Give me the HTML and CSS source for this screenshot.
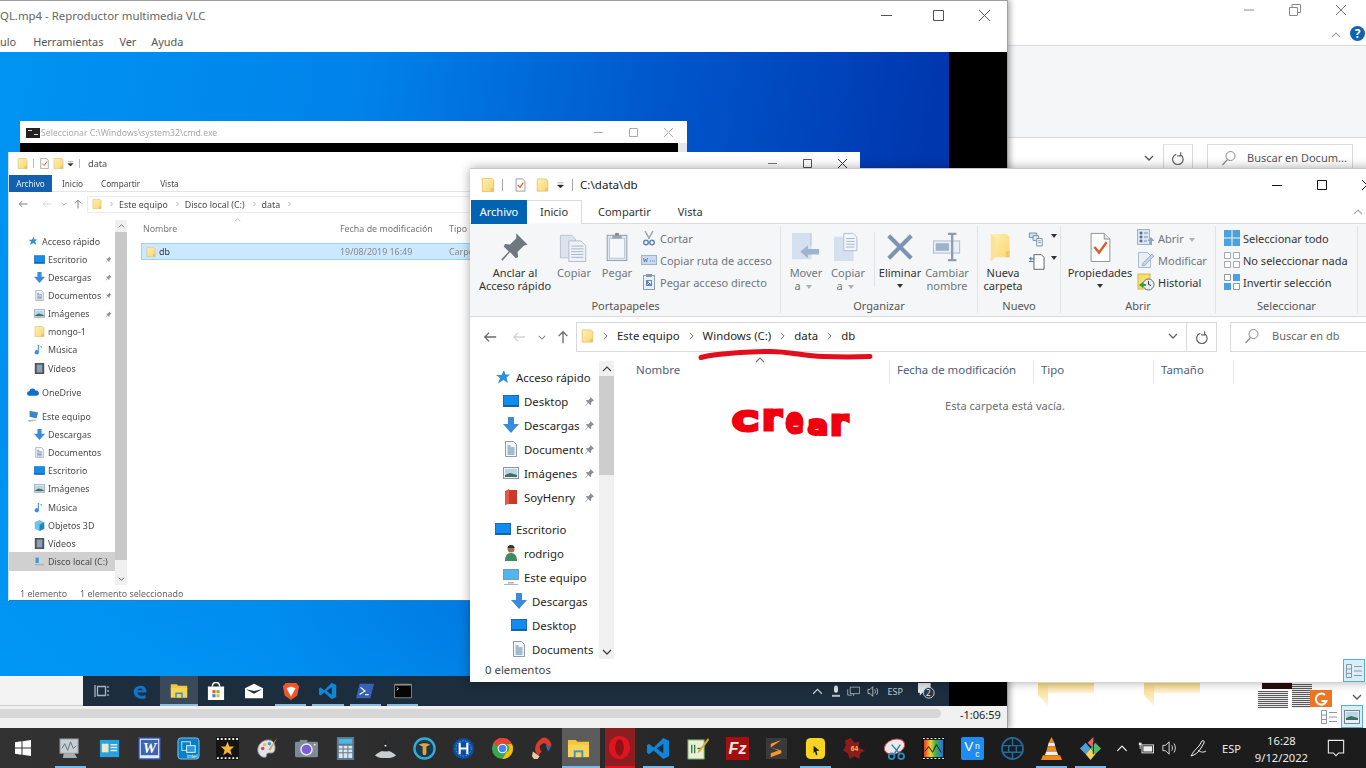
FILE: index.html
```html
<!DOCTYPE html>
<html lang="es">
<head>
<meta charset="utf-8">
<title>C:\data\db</title>
<link rel="stylesheet" href="styles.css">
</head>
<body>
<svg class="defs" aria-hidden="true">
<defs>
<linearGradient id="g-folder" x1="0" y1="0" x2="1" y2="1"><stop offset="0" stop-color="#fff0b0"/><stop offset="1" stop-color="#f8d577"/></linearGradient>
<linearGradient id="g-bf" x1="0" y1="0" x2="0" y2="1"><stop offset="0" stop-color="#f6d883"/><stop offset="1" stop-color="#fdf3d6"/></linearGradient>
<symbol id="i-folder" viewBox="0 0 16 16"><path d="M1.5.5h11l2 2v13h-13z" fill="url(#g-folder)" stroke="#e3c270"/><path d="M11 15.5V12l3.5-1v4.5z" fill="#e9c468"/></symbol>
<symbol id="i-check" viewBox="0 0 16 16"><path d="M2.5.5h8l3 3v12h-11z" fill="#fff" stroke="#8a8a8a"/><path d="M4.5 8l3 3 4-6" fill="none" stroke="#e0562a" stroke-width="1.4"/></symbol>
<symbol id="i-pin" viewBox="0 0 24 24"><path d="M13 1l9 9-3 1-5 5 .5 4-2 1-4.5-5-6 7-1-1 6-6.500-4-4 1-2 4 .5 5-5z" fill="#6f7780"/></symbol>
<symbol id="i-pins" viewBox="0 0 12 12"><path d="M7 1l4 4-1.500.5-2 2 .3 2-1 .5-2-2.300-3 3.300-.6-.5 3-3.200-2-2 .5-1 2 .3 2-2z" fill="#8a9098"/></symbol>
<symbol id="i-copy" viewBox="0 0 32 32"><path d="M1.500 3.500h12l4 4v20h-16z" fill="#dbe3ee" stroke="#b7c1cd"/><path d="M10.500 9.500h13l5 5v17h-18z" fill="#eef2f7" stroke="#b0bac6"/><path d="M13 15h13M13 18h13M13 21h13M13 24h13M13 27h13" stroke="#9fb3c9"/></symbol>
<symbol id="i-paste" viewBox="0 0 32 32"><rect x="5.500" y="3.500" width="21" height="27" fill="#dde6f3" stroke="#8f9aa8"/><rect x="8" y="7" width="16" height="21" fill="#f4f7fb" stroke="#bcc6d4"/><path d="M11 3.500h10V7H11z" fill="#9aa6b4"/><rect x="14" y="1" width="4" height="3" fill="#7f8a97"/></symbol>
<symbol id="i-cut" viewBox="0 0 16 16"><path d="M4 1l4.500 8M12 1L7.500 9" stroke="#9aa3ad" stroke-width="1.500" fill="none"/><circle cx="5" cy="12.500" r="2.300" fill="none" stroke="#5e87b3" stroke-width="1.400"/><circle cx="11" cy="12.500" r="2.300" fill="none" stroke="#5e87b3" stroke-width="1.400"/></symbol>
<symbol id="i-path" viewBox="0 0 16 16"><rect x=".5" y="3.500" width="15" height="9" fill="#c9d9ee" stroke="#9bb4d2"/><path d="M2.500 6l1 4 1-3 1 3 1-4M9 9h1M11 9h1M13 9h1" stroke="#6786a9" fill="none"/></symbol>
<symbol id="i-short" viewBox="0 0 16 16"><rect x="2.500" y="1.500" width="11" height="14" fill="#e8eef6" stroke="#8aa0b8"/><rect x="5" y="0" width="6" height="3" fill="#8a98a8"/><rect x="5" y="6" width="6" height="6" fill="#5d89bd"/><path d="M6.500 10.500l3-3M7.500 7.500h2v2" stroke="#fff" fill="none"/></symbol>
<symbol id="i-move" viewBox="0 0 32 32"><path d="M1 1h21v28H1z" fill="#d4e0ef"/><path d="M22 1v13h-1.500V1z" fill="#c2d1e4"/><path d="M10 21l8-7v4h12v6H18v4z" fill="#9eb3cc"/></symbol>
<symbol id="i-copyto" viewBox="0 0 32 32"><path d="M1 5h21v26H1z" fill="#d4e0ef"/><path d="M11.500 1.500h10l4 4V20h-14z" fill="#f2f5f9" stroke="#adbccd"/><path d="M14 7h9M14 10h9M14 13h9M14 16h9" stroke="#9fb3c9"/></symbol>
<symbol id="i-x" viewBox="0 0 32 32"><path d="M4 4l24 24M28 4L4 28" stroke="#7d93b2" stroke-width="4.500" fill="none"/></symbol>
<symbol id="i-rename" viewBox="0 0 32 32"><rect x="1.500" y="9.500" width="28" height="13" fill="#e7eef7" stroke="#a9bcd3"/><rect x="4" y="12" width="14" height="8" fill="#9fb1c8"/><path d="M17 2h9M17 30h9M21.500 2v28" stroke="#8e9cae" stroke-width="2.500" fill="none"/></symbol>
<symbol id="i-newf" viewBox="0 0 32 32"><path d="M3 2h17l3 3v22H8l-5 4z" fill="url(#g-folder)"/><path d="M3 2v29l5-4V6z" fill="#fae29a"/><path d="M19 27v-6l4-1v7z" fill="#edc866"/></symbol>
<symbol id="i-newi" viewBox="0 0 24 16"><path d="M1.500 1.500h8v5h-8z" fill="#cfe0f0" stroke="#6c87a3"/><path d="M5.500 4.500h6v5h-6z" fill="#e7eff7" stroke="#6c87a3"/><path d="M9.500 7.500h6v8h-6z" fill="#fff" stroke="#6c87a3"/><path d="M11 10h3M11 12h3" stroke="#6c87a3"/></symbol>
<symbol id="i-newd" viewBox="0 0 24 18"><path d="M6.500 1.500h8l3 3v13h-11z" fill="#fff" stroke="#555"/><path d="M1 6h6M3 4v4M1 9h5" stroke="#2f6ea8"/></symbol>
<symbol id="i-props" viewBox="0 0 32 32"><path d="M6.500 1.500h14l6 6v24h-20z" fill="#fdfdfd" stroke="#8d8d8d"/><path d="M20.500 1.500v6h6" fill="#e8e8e8" stroke="#8d8d8d"/><path d="M10 16l5 6 8-11" fill="none" stroke="#e2562a" stroke-width="2.500"/></symbol>
<symbol id="i-open" viewBox="0 0 18 18"><rect x=".5" y=".5" width="12" height="15" fill="#dbe5f1" stroke="#9fb2c7"/><path d="M3 3h2v2H3zM3 7h2v2H3zM3 11h2v2H3zM7 4h4M7 8h4M7 12h3" stroke="#7a93ae"/><path d="M14 8l3.500 4H15v4h-2v-4h-2.500z" fill="#8ba6c3"/></symbol>
<symbol id="i-edit" viewBox="0 0 18 18"><path d="M1.500 1.500h9l3 3v12h-12z" fill="#e8eff7" stroke="#a9bcd0"/><path d="M5 15l1-3 9-9 2 2-9 9z" fill="#c5d6e8" stroke="#9db3ca"/></symbol>
<symbol id="i-hist" viewBox="0 0 18 18"><rect x="1" y="1" width="12" height="15" fill="#f7dd6e" stroke="#d5b84c"/><circle cx="11.500" cy="11.500" r="5.500" fill="#e8eef2" stroke="#60707c"/><path d="M11.500 8v3.500l2.500 1" stroke="#333" fill="none"/><path d="M2 12l4-3v2h3v2H6v2z" fill="#2f9f3b"/></symbol>
<symbol id="i-sa" viewBox="0 0 16 16"><path d="M0 0h16v16H0z" fill="#4aa1dd"/><path d="M7.500 0v16M8.500 0v16M0 7.500h16M0 8.500h16" stroke="#d9ecf8" stroke-width=".6"/></symbol>
<symbol id="i-sn" viewBox="0 0 16 16"><path d="M.5.500h6v6h-6zM9.500.500h6v6h-6zM.5 9.500h6v6h-6zM9.500 9.500h6v6h-6z" fill="#fff" stroke="#a8a8a8"/></symbol>
<symbol id="i-si" viewBox="0 0 16 16"><path d="M.5.500h6v6h-6zM9.500 9.500h6v6h-6z" fill="#fff" stroke="#8a9aa8"/><path d="M9 0h7v7H9zM0 9h7v7H0z" fill="#4aa1dd"/></symbol>
<symbol id="i-back" viewBox="0 0 16 16"><path d="M15 8H2M7 3L2 8l5 5" fill="none" stroke="currentColor" stroke-width="1.500"/></symbol>
<symbol id="i-up" viewBox="0 0 16 16"><path d="M8 15V2M3 7l5-5 5 5" fill="none" stroke="currentColor" stroke-width="1.500"/></symbol>
<symbol id="i-cd" viewBox="0 0 10 6"><path d="M1 1l4 4 4-4" fill="none" stroke="currentColor" stroke-width="1.300"/></symbol>
<symbol id="i-cu" viewBox="0 0 10 6"><path d="M1 5l4-4 4 4" fill="none" stroke="currentColor" stroke-width="1.100"/></symbol>
<symbol id="i-cr" viewBox="0 0 6 10"><path d="M1 1l4 4-4 4" fill="none" stroke="currentColor" stroke-width="1.200"/></symbol>
<symbol id="i-refresh" viewBox="0 0 16 16"><path d="M6 2.800A6 6 0 1 0 11 3.400M11 .5v4h-4" fill="none" stroke="#666" stroke-width="1.400" transform="translate(0 1)"/></symbol>
<symbol id="i-search" viewBox="0 0 16 16"><circle cx="9.500" cy="6" r="4.500" fill="none" stroke="#8a8a8a"/><path d="M6.500 9.500L1.500 15" stroke="#8a8a8a" stroke-width="1.200"/></symbol>
<symbol id="i-star" viewBox="0 0 16 16"><path d="M9 1l1.500 4.500H15l-3.500 3L13 14 8.500 11 3 14.500l2-5.500L1 6h5.500z" fill="#2f8fdd"/></symbol>
<symbol id="i-desk" viewBox="0 0 16 12"><rect x=".5" y=".5" width="15" height="11" fill="#0f8df0" stroke="#226aa8"/><rect x="1" y="10" width="14" height="1.500" fill="#165f9d"/></symbol>
<symbol id="i-dl" viewBox="0 0 16 16"><path d="M5 0h6v7h5l-8 9-8-9h5z" fill="#3b8bdc"/></symbol>
<symbol id="i-doc" viewBox="0 0 12 16"><path d="M.5.500h8l3 3v12H.5z" fill="#f5f7f9" stroke="#8e9aa6"/><path d="M2.500 5h3M2.500 7h7M2.500 9h7M2.500 11h7M2.500 13h7" stroke="#517fa8"/></symbol>
<symbol id="i-pic" viewBox="0 0 16 12"><rect x=".5" y=".5" width="15" height="11" fill="#eef2f6" stroke="#8a96a2"/><rect x="2" y="2" width="12" height="8" fill="#b8d4ea"/><path d="M2 8l5-2 7 2v2H2z" fill="#3f7060"/></symbol>
<symbol id="i-red" viewBox="0 0 14 16"><path d="M1 2l4-2v15l-4 1z" fill="#e05a3f"/><path d="M5 1h8v14H5z" fill="#c93a2b"/></symbol>
<symbol id="i-user" viewBox="0 0 14 16"><circle cx="7" cy="4" r="3.500" fill="#a47048"/><path d="M7 0a3.500 3 0 0 1 3.500 3h-7A3.500 3 0 0 1 7 0z" fill="#333"/><path d="M1 16c0-5 2-8 6-8s6 3 6 8z" fill="#3f8d5f"/></symbol>
<symbol id="i-pc" viewBox="0 0 16 16"><rect x=".5" y=".5" width="15" height="10" fill="#4fb6ee" stroke="#7e98ad"/><path d="M5 13h6v1.500H5zM1 15h14v1H1z" fill="#aab6c0"/></symbol>
<symbol id="i-cloud" viewBox="0 0 16 10"><path d="M3 10a3 3 0 0 1 0-6 4.500 4.500 0 0 1 8.500-1A3.500 3.500 0 0 1 13 10z" fill="#0f6fc9"/></symbol>
<symbol id="i-note" viewBox="0 0 12 16"><path d="M5 1v11a3 3 0 1 1-1.500-2.500V1l6 3v2z" fill="#2f8fdd"/></symbol>
<symbol id="i-3d" viewBox="0 0 14 14"><path d="M1 3l6-3 6 3v8l-6 3-6-3z" fill="#6dc4e6"/><path d="M7 6l6-3v8l-6 3z" fill="#1d84c2"/></symbol>
<symbol id="i-film" viewBox="0 0 12 14"><rect width="12" height="14" fill="#4a5560"/><rect x="2.500" y="2" width="7" height="10" fill="#8fa0af"/></symbol>
<symbol id="i-drive" viewBox="0 0 14 12"><path d="M2 1h4v7H2z" fill="#3a9bd5"/><path d="M1 9h12v2H1z" fill="#aab4bd"/></symbol>
<symbol id="i-comp" viewBox="0 0 14 14"><path d="M3 1l10 2-2 7-8-2z" fill="#3a86c8"/><path d="M0 12l9-1 3 1-9 2z" fill="#b7bec5"/></symbol>
<symbol id="t-win" viewBox="0 0 16 16"><path d="M0 2.200l6.500-.9v6.200H0zM7.500 1.200L16 0v7.500H7.500zM0 8.500h6.500v6.200L0 13.800zM7.500 8.500H16V16l-8.500-1.200z" fill="#fff"/></symbol>
<symbol id="t-perf" viewBox="0 0 24 24"><rect x="1" y="2" width="19" height="15" fill="#c9ced3" stroke="#8a8f94"/><path d="M3 12l3-5 3 7 3-9 3 7 3-3" stroke="#5a7088" fill="none"/><path d="M5 17h11l3 5H4z" fill="#a8aeb4"/></symbol>
<symbol id="t-card" viewBox="0 0 24 24"><rect x="2" y="3" width="20" height="18" fill="#29a0e2"/><rect x="4" y="7" width="7" height="9" fill="#f0e6c8"/><path d="M13 8h7M13 11h7M13 14h7" stroke="#d6f0ff" stroke-width="1.500"/></symbol>
<symbol id="t-word" viewBox="0 0 24 24"><rect x="1" y="1" width="22" height="22" fill="#dfe8f5" stroke="#2b4f9e" stroke-width="1.500"/><rect x="3" y="3" width="18" height="16" fill="#3d64b3"/><text x="12" y="16.500" font-family="Liberation Serif, serif" font-size="16" font-weight="700" font-style="italic" fill="#fff" text-anchor="middle">W</text></symbol>
<symbol id="t-intel" viewBox="0 0 24 24"><rect x="1" y="1" width="22" height="22" rx="3" fill="#0b7fc3" stroke="#7cc9ef"/><rect x="5" y="5" width="9" height="9" fill="none" stroke="#bfe7fb"/><rect x="10" y="9" width="9" height="7" fill="#2a9ad8" stroke="#dff3fd"/><text x="16" y="22" font-family="Liberation Sans, sans-serif" font-size="6" fill="#fff" text-anchor="middle">intel</text></symbol>
<symbol id="t-movie" viewBox="0 0 24 24"><rect width="24" height="24" fill="#141414"/><path d="M1 1h2v2H1zM5 1h2v2H5zM9 1h2v2H9zM13 1h2v2h-2zM17 1h2v2h-2zM21 1h2v2h-2zM1 21h2v2H1zM5 21h2v2H5zM9 21h2v2H9zM13 21h2v2h-2zM17 21h2v2h-2zM21 21h2v2h-2z" fill="#eee"/><path d="M12 5l2 5h5l-4 3.500 1.500 5.500-4.500-3-4.500 3L9 13.500 5 10h5z" fill="#f3b73a"/></symbol>
<symbol id="t-palette" viewBox="0 0 24 24"><path d="M13 3C6 3 1 9 2 15c.7 4 5 7 8 6 2-.8 0-3 2-4s5 1 7-2 1-12-6-12z" fill="#dfe4e8" stroke="#8a9198"/><circle cx="7" cy="12" r="1.800" fill="#d34a3f"/><circle cx="9" cy="8" r="1.800" fill="#f1c33c"/><circle cx="14" cy="7" r="1.800" fill="#3f9ad3"/><path d="M22 1l-9 12 2 1z" fill="#d9a349"/></symbol>
<symbol id="t-cam" viewBox="0 0 24 24"><rect x="0" y="5" width="24" height="16" rx="1.500" fill="#7d8b96"/><rect x="5" y="3" width="8" height="3" fill="#7d8b96"/><circle cx="12" cy="13" r="6.500" fill="#e9eef2"/><circle cx="12" cy="13" r="5" fill="#7e5ed0"/><circle cx="20.500" cy="8" r="1" fill="#e6eaee"/></symbol>
<symbol id="t-calc" viewBox="0 0 24 24"><rect x="3" y="0" width="18" height="24" fill="#5d7992"/><rect x="5" y="2" width="14" height="5" fill="#4bb8e0"/><path d="M5 9h4v3H5zM10 9h4v3h-4zM15 9h4v3h-4zM5 13h4v3H5zM10 13h4v3h-4zM15 13h4v3h-4zM5 17h4v5H5zM10 17h4v5h-4zM15 17h4v5h-4z" fill="#dde4ea"/></symbol>
<symbol id="t-hat" viewBox="0 0 24 24"><path d="M12 1l-3 12 6 0z" fill="#25282b"/><path d="M1 19c4-3 7-5 11-5s7 2 11 5c-4 3-7 3-11 3s-7 0-11-3z" fill="#c9ced2"/><path d="M9 11h6v4H9z" fill="#25282b"/><circle cx="12" cy="9" r="1" fill="#fff"/></symbol>
<symbol id="t-t" viewBox="0 0 24 24"><circle cx="12" cy="12" r="10.500" fill="#143b50" stroke="#3aa8d4" stroke-width="2.500"/><path d="M6 8c4-2 8-2 12 0l-4 2v7a2 2 0 0 1-4 0v-7z" fill="#e8a23a"/></symbol>
<symbol id="t-h" viewBox="0 0 24 24"><circle cx="12" cy="12" r="11" fill="#0a4fa6"/><circle cx="12" cy="12" r="8" fill="none" stroke="#5aa7e8" stroke-dasharray="1.500 1.500"/><path d="M8 6v12M16 6v12M8 12h8" stroke="#fff" stroke-width="2.200"/></symbol>
<symbol id="t-chrome" viewBox="0 0 24 24"><circle cx="12" cy="12" r="11" fill="#36a852"/><path d="M2.500 6.500A11 11 0 0 1 22 7.500H12a4.500 4.500 0 0 0-4.300 3z" fill="#e94235"/><path d="M22 7.500A11 11 0 0 1 12 23l4-7a4.500 4.500 0 0 0 0-8.500z" fill="#fbbc04"/><circle cx="12" cy="12" r="5" fill="#fff"/><circle cx="12" cy="12" r="3.900" fill="#4285f4"/></symbol>
<symbol id="t-ccl" viewBox="0 0 24 24"><path d="M16 1c4 2 6 6 5 9l-5-1c0-2-2-3-4-2-3 1-4 5-1 8l-3 4C2 15 4 7 9 3c2-2 5-3 7-2z" fill="#d93a2f"/><path d="M16 9c2 0 4 1 5 1l-3 5c-1-2-2-4-2-6z" fill="#2f6fb8"/><path d="M2 15l7 5-2 3H3l-2-3z" fill="#e8c9a2"/></symbol>
<symbol id="t-folder" viewBox="0 0 24 24"><path d="M1 3h8l2 2h12v4H1z" fill="#f3c73e"/><path d="M1 8h22v13H1z" fill="#f8d455"/><rect x="7" y="14" width="10" height="7" fill="#3c8fd0"/><rect x="9" y="16" width="6" height="5" fill="#f8d455"/></symbol>
<symbol id="t-opera" viewBox="0 0 24 24"><ellipse cx="12" cy="12" rx="11" ry="12" fill="#e01421"/><ellipse cx="12" cy="12" rx="4.500" ry="8.500" fill="#8f1219"/></symbol>
<symbol id="t-code" viewBox="0 0 24 24"><path d="M17 1l6 3v16l-6 3-10-9-5 4-2-1.500V8.500L2 7l5 4z" fill="#1185d6"/><path d="M17 7L10 12l7 5z" fill="#0d2a44"/></symbol>
<symbol id="t-notepad" viewBox="0 0 24 24"><rect x="2" y="3" width="17" height="20" fill="#e8f0dc" stroke="#6f9d4f"/><path d="M6 8v9M9 8v9M12 12h4" stroke="#2f7d3a" stroke-width="1.400"/><path d="M23 1L13 14l-1 3 3-2L24 3z" fill="#e3a93c"/></symbol>
<symbol id="t-fz" viewBox="0 0 24 24"><rect width="24" height="24" fill="#a30f0f"/><text x="12" y="18" font-family="Liberation Sans, sans-serif" font-size="17" font-weight="700" font-style="italic" fill="#f5e9e0" text-anchor="middle">Fz</text></symbol>
<symbol id="t-sub" viewBox="0 0 24 24"><rect x="1" y="1" width="22" height="22" fill="#3a3a3a"/><path d="M17 5L6 9v4l11 3v3L6 23l0-4 8-3-8-3z" transform="translate(0 -2)" fill="#f39a26"/></symbol>
<symbol id="t-yellow" viewBox="0 0 24 24"><rect x="2" y="1" width="20" height="22" rx="5" fill="#f7d422"/><path d="M10 9l6 5-3 .5 1 4-1.500.5-1-4L10 17z" fill="#222"/></symbol>
<symbol id="t-puzzle" viewBox="0 0 24 24"><path d="M8 1l4 5 5-1-1 6 7 3-5 3-1 6-5-3-5 3-2-6-5-3 3-5-1-5z" fill="#8d1d1d"/><text x="12" y="15" font-family="Liberation Sans, sans-serif" font-size="7" font-weight="700" fill="#f2c544" text-anchor="middle">64</text></symbol>
<symbol id="t-snip" viewBox="0 0 24 24"><ellipse cx="12" cy="10" rx="11" ry="7.500" fill="#e9e9ea" stroke="#c04646" transform="rotate(-20 12 10)"/><path d="M9 8l8 9M18 8l-6 9" stroke="#357aa8" stroke-width="1.400"/><circle cx="9" cy="20" r="3" fill="none" stroke="#2f8bc0" stroke-width="1.800"/><circle cx="19" cy="20" r="3" fill="none" stroke="#2f8bc0" stroke-width="1.800"/></symbol>
<linearGradient id="g-rain" x1="0" y1="0" x2="1" y2="0"><stop offset="0" stop-color="#e8372d"/><stop offset=".35" stop-color="#f0d22c"/><stop offset=".6" stop-color="#39b54a"/><stop offset="1" stop-color="#2a6de0"/></linearGradient>
<symbol id="t-rain" viewBox="0 0 24 24"><rect width="24" height="24" fill="#111"/><rect x="2" y="3" width="20" height="18" fill="url(#g-rain)"/><path d="M1 1h2v1H1zM5 1h2v1H5zM9 1h2v1H9zM13 1h2v1h-2zM17 1h2v1h-2zM21 1h2v1h-2zM1 22h2v1H1zM5 22h2v1H5zM9 22h2v1H9zM13 22h2v1h-2zM17 22h2v1h-2zM21 22h2v1h-2z" fill="#eee"/><path d="M3 15l4-5 4 6 4-8 5 8" fill="none" stroke="#111"/></symbol>
<symbol id="t-vc" viewBox="0 0 24 24"><rect width="24" height="24" rx="2" fill="#1e8cf0"/><text x="8" y="15" font-family="Liberation Sans, sans-serif" font-size="14" fill="#fff" text-anchor="middle">V</text><text x="17" y="12" font-family="Liberation Sans, sans-serif" font-size="9" fill="#fff" text-anchor="middle">n</text><text x="17" y="21" font-family="Liberation Sans, sans-serif" font-size="9" fill="#fff" text-anchor="middle">c</text></symbol>
<symbol id="t-globe" viewBox="0 0 24 24"><circle cx="12" cy="12" r="11" fill="none" stroke="#1f6d9e" stroke-width="1.800"/><path d="M2 9h20M2 16h20M8 9v7M16 9v7M12 1v8M12 16v7" stroke="#1f6d9e" stroke-width="1.500" fill="none"/></symbol>
<symbol id="t-vlc" viewBox="0 0 24 24"><path d="M12 0l3 6H9z" fill="#f28a18"/><path d="M9 6h6l1 4H8z" fill="#eee"/><path d="M8 10h8l1.500 5h-11z" fill="#f28a18"/><path d="M6.500 15h11l1.500 4H5z" fill="#eee"/><path d="M3 19h18l2 5H1z" fill="#f28a18"/></symbol>
<symbol id="t-kraken" viewBox="0 0 24 24"><path d="M12 12L6 6l6-6z" fill="#e36a70" transform="translate(3 0)"/><path d="M1 12l6-6 5 6-5 6z" fill="#4ea0d8"/><path d="M12 12l5-6 6 6-6 6z" fill="#54b86c"/><path d="M7 18l5-6 5 6-5 6z" fill="#f4d35e"/><path d="M15 6v12" stroke="#1c1c1c"/></symbol>
<symbol id="s-bat" viewBox="0 0 18 14"><rect x="4.500" y="3.500" width="13" height="9" fill="none" stroke="#eee"/><rect x="6" y="5" width="10" height="6" fill="#eee"/><path d="M1 1v3h3V1z" fill="#eee"/><path d="M2.500 4v4" stroke="#eee"/></symbol>
<symbol id="s-spk" viewBox="0 0 18 16"><path d="M1 5h3l4-4v14l-4-4H1z" fill="none" stroke="#eee"/><path d="M11 5c1 2 1 4 0 6M13.500 3c2 3 2 7 0 10" fill="none" stroke="#eee"/></symbol>
<symbol id="s-pen" viewBox="0 0 20 20"><path d="M3 18c2-4 5-7 8-10l3-5c1-1 3 0 2 2l-3 5c-2 4-6 7-10 8zM10 12c2 2 5 3 8 1" fill="none" stroke="#eee"/></symbol>
<symbol id="s-note" viewBox="0 0 20 20"><path d="M1.500 1.500h17v14H13l-3 3-3-3H1.500z" fill="none" stroke="#eee" stroke-width="1.200"/></symbol>
<symbol id="v-view" viewBox="0 0 16 14"><path d="M.5.500h5v13h-5z" fill="none" stroke="#8a98a5"/><path d="M.5 5h5M.5 9.500h5M8 2.500h8M8 7h8M8 11.500h8" stroke="#8a98a5"/></symbol>
<symbol id="v-large" viewBox="0 0 16 14"><rect x=".5" y=".5" width="15" height="13" fill="#e8eef4" stroke="#77858f"/><rect x="2" y="2" width="12" height="8" fill="#b9d6ea"/><path d="M2 8l5-2 7 2v2H2z" fill="#3f7060"/></symbol>
<symbol id="v-task" viewBox="0 0 16 14"><path d="M3.500 2.500h8v9h-8zM1 1v12M14 2v2M14 6v2M14 10v2" fill="none" stroke="#aab3bd" stroke-width="1.300"/></symbol>
<symbol id="v-edge" viewBox="0 0 20 20"><path d="M2 10C3 3 16 0 18 9v3H7c0 4 6 5 10 3v4c-6 2-15 0-15-9zm5-1h6c0-3-5-3-6 0z" fill="#1172c9"/></symbol>
<symbol id="v-store" viewBox="0 0 20 20"><path d="M1 5h18v15H1z" fill="#fff"/><path d="M6 5c0-6 8-6 8 0" fill="none" stroke="#fff" stroke-width="1.500"/><path d="M6 9h3.500v3.500H6z" fill="#e85a30"/><path d="M10.500 9H14v3.500h-3.500z" fill="#7cb83a"/><path d="M6 13.500h3.500V17H6z" fill="#2a90dd"/><path d="M10.500 13.500H14V17h-3.500z" fill="#f4b71f"/></symbol>
<symbol id="v-mail" viewBox="0 0 20 16"><path d="M0 5l10-5 10 5v11H0z" fill="#fff"/><path d="M1 6l9 5 9-5-9 2z" fill="#1c2b3a"/></symbol>
<symbol id="v-brave" viewBox="0 0 20 20"><path d="M4 1h12l3 4-2 10-7 5-7-5L1 5z" fill="#f0562a"/><path d="M10 5l5 2-5 9-5-9z" fill="#fff"/></symbol>
<symbol id="v-ps" viewBox="0 0 20 16"><path d="M4 0h16l-4 16H0z" fill="#3561b8"/><path d="M5 4l5 4-6 4M10 12h4" fill="none" stroke="#fff" stroke-width="1.300"/></symbol>
<symbol id="v-term" viewBox="0 0 20 16"><rect width="20" height="16" rx="1" fill="#888"/><rect x="1" y="2" width="18" height="13" fill="#050505"/><path d="M3 4l2 1.500L3 7" fill="none" stroke="#ddd"/></symbol>
<symbol id="v-cmd" viewBox="0 0 14 10"><rect width="14" height="10" fill="#222"/><path d="M2 2h4v1H2zM8 6h4v1H8z" fill="#ddd"/></symbol>
<symbol id="v-mic" viewBox="0 0 12 18"><rect x="3" y="0" width="6" height="11" rx="3" fill="#d8dde2"/><path d="M0 14h12v3H0z" fill="#bbb"/></symbol>
<symbol id="v-net" viewBox="0 0 18 14"><path d="M4.500 1h13v9h-13zM1 4v8h6M9 10v3" fill="none" stroke="#c7ced4"/></symbol>
<symbol id="v-msg" viewBox="0 0 20 18"><path d="M0 0h14v11H5l-3 3v-3H0z" fill="#e3e7ea"/><circle cx="12" cy="11" r="6" fill="#2a3a48" stroke="#d0d4d8"/></symbol>
</defs>
</svg>

<main class="desktop">
  <section class="win back">
    <div class="back-title">
      <svg class="back-ctl"><path d="M1 6h10" stroke="#8a8a8a"/></svg>
      <svg class="back-ctl restore"><path d="M.5 3.500h8v8h-8zM3 3V.5h8.500v8H9" fill="none" stroke="#8a8a8a"/></svg>
      <svg class="back-ctl"><path d="M1 1l10 10M11 1L1 11" stroke="#7a7a7a" fill="none"/></svg>
    </div>
    <div class="back-help">
      <svg class="cu"><use href="#i-cu"/></svg>
      <span class="help">?</span>
    </div>
    <div class="back-ribbon"></div>
    <div class="back-addr">
      <svg class="cd"><use href="#i-cd"/></svg>
      <span class="back-ref"><svg class="s14"><use href="#i-refresh"/></svg></span>
      <span class="back-search"><svg class="s16"><use href="#i-search"/></svg><span>Buscar en Docum...</span></span>
    </div>
    <div class="back-fill"></div>
    <div class="back-files">
      <svg class="bfolder" viewBox="0 0 56 23"><path d="M0 0h10v23L0 12z" fill="url(#g-bf)"/><path d="M10 0h46v10H10z" fill="url(#g-bf)"/></svg>
      <svg class="bfolder second" viewBox="0 0 56 23"><path d="M0 0h10v23L0 12z" fill="url(#g-bf)"/><path d="M10 0h46v10H10z" fill="url(#g-bf)"/></svg>
      <div class="thumb">
        <span class="thumb-dark"></span>
        <span class="thumb-lines"></span>
        <span class="thumb-lines col2"></span>
        <svg class="foxit" viewBox="0 0 22 17"><rect width="22" height="17" fill="#ee7623"/><path d="M15 5a5.500 5.500 0 1 0 1.500 6h-5" fill="none" stroke="#fff" stroke-width="2"/></svg>
      </div>
      <svg class="back-scroll"><use href="#i-cd"/></svg>
    </div>
    <div class="back-views">
      <svg class="s-view"><use href="#v-view"/></svg>
      <span class="view-on"><svg class="s-view"><use href="#v-large"/></svg></span>
    </div>
  </section>

  <section class="win vlc">
    <header class="vlc-title">
      <span class="vlc-name">QL.mp4 - Reproductor multimedia VLC</span>
      <span class="ctls">
        <svg class="ctl"><path d="M0 5.500h11" stroke="#555"/></svg>
        <svg class="ctl"><path d="M.5.500h10v10H.5z" fill="none" stroke="#555"/></svg>
        <svg class="ctl"><path d="M0 0l11 11M11 0L0 11" stroke="#555" fill="none"/></svg>
      </span>
    </header>
    <nav class="vlc-menu"><span class="m0">ulo</span><span class="m1">Herramientas</span><span class="m2">Ver</span><span class="m3">Ayuda</span></nav>
    <div class="video">
      <div class="cmd">
        <div class="cmd-title">
          <svg class="cmd-ic"><use href="#v-cmd"/></svg><span class="cmd-name">Seleccionar C:\Windows\system32\cmd.exe</span>
          <span class="cmd-ctls">
            <svg class="vc"><path d="M0 4.500h9" stroke="#aaa"/></svg>
            <svg class="vc"><path d="M.5.500h8v8h-8z" fill="none" stroke="#aaa"/></svg>
            <svg class="vc"><path d="M0 0l9 9M9 0L0 9" stroke="#aaa" fill="none"/></svg>
          </span>
        </div>
        <div class="cmd-body"><span class="cmd-scroll"></span></div>
      </div>

      <div class="inner">
        <div class="i-title">
          <svg class="s11 ml6"><use href="#i-folder"/></svg><span class="isep"></span>
          <svg class="s11"><use href="#i-check"/></svg>
          <svg class="s11"><use href="#i-folder"/></svg>
          <svg class="i-drop" viewBox="0 0 8 8"><path d="M1 2h6M1 4h6L4 7z" fill="#333" stroke="#333" stroke-width=".5"/></svg><span class="isep"></span>
          <span class="i-name">data</span>
          <span class="i-ctls">
            <svg class="vc"><path d="M0 4.500h9" stroke="#777"/></svg>
            <svg class="vc"><path d="M.5.500h8v8h-8z" fill="none" stroke="#555"/></svg>
            <svg class="vc"><path d="M0 0l9 9M9 0L0 9" stroke="#333" fill="none"/></svg>
          </span>
        </div>
        <div class="i-tabs"><span class="i-arch">Archivo</span><span class="i-t1">Inicio</span><span class="i-t2">Compartir</span><span class="i-t3">Vista</span></div>
        <div class="i-addr">
          <svg class="i-nav a"><use href="#i-back"/></svg>
          <svg class="i-nav b"><use href="#i-back"/></svg>
          <svg class="i-nav2"><use href="#i-cd"/></svg>
          <svg class="i-nav a up"><use href="#i-up"/></svg>
          <div class="i-path">
            <svg class="s10"><use href="#i-folder"/></svg>
            <svg class="i-cr"><use href="#i-cr"/></svg><span>Este equipo</span>
            <svg class="i-cr"><use href="#i-cr"/></svg><span>Disco local (C:)</span>
            <svg class="i-cr"><use href="#i-cr"/></svg><span>data</span>
            <svg class="i-cr"><use href="#i-cr"/></svg>
          </div>
        </div>
        <div class="i-body">
          <div class="i-tree">
            <div class="irow lv0 first"><svg class="s10"><use href="#i-star"/></svg><span>Acceso rápido</span></div>
            <div class="irow"><svg class="s11"><use href="#i-desk"/></svg><span>Escritorio</span><svg class="ipin"><use href="#i-pins"/></svg></div>
            <div class="irow"><svg class="s11"><use href="#i-dl"/></svg><span>Descargas</span><svg class="ipin"><use href="#i-pins"/></svg></div>
            <div class="irow"><svg class="s11"><use href="#i-doc"/></svg><span>Documentos</span><svg class="ipin"><use href="#i-pins"/></svg></div>
            <div class="irow"><svg class="s11"><use href="#i-pic"/></svg><span>Imágenes</span><svg class="ipin"><use href="#i-pins"/></svg></div>
            <div class="irow"><svg class="s11"><use href="#i-folder"/></svg><span>mongo-1</span></div>
            <div class="irow"><svg class="s11"><use href="#i-note"/></svg><span>Música</span></div>
            <div class="irow"><svg class="s11"><use href="#i-film"/></svg><span>Vídeos</span></div>
            <div class="irow lv0 gap"><svg class="s12"><use href="#i-cloud"/></svg><span>OneDrive</span></div>
            <div class="irow lv0 gap"><svg class="s12"><use href="#i-comp"/></svg><span>Este equipo</span></div>
            <div class="irow"><svg class="s11"><use href="#i-dl"/></svg><span>Descargas</span></div>
            <div class="irow"><svg class="s11"><use href="#i-doc"/></svg><span>Documentos</span></div>
            <div class="irow"><svg class="s11"><use href="#i-desk"/></svg><span>Escritorio</span></div>
            <div class="irow"><svg class="s11"><use href="#i-pic"/></svg><span>Imágenes</span></div>
            <div class="irow"><svg class="s11"><use href="#i-note"/></svg><span>Música</span></div>
            <div class="irow"><svg class="s11"><use href="#i-3d"/></svg><span>Objetos 3D</span></div>
            <div class="irow"><svg class="s11"><use href="#i-film"/></svg><span>Vídeos</span></div>
            <div class="irow sel"><svg class="s11"><use href="#i-drive"/></svg><span>Disco local (C:)</span></div>
          </div>
          <div class="i-scroll">
            <svg class="i-sa"><use href="#i-cu"/></svg>
            <span class="i-thumb"></span>
            <svg class="i-sa"><use href="#i-cd"/></svg>
          </div>
          <div class="i-main">
            <div class="i-head"><span class="ih1">Nombre</span><span class="ih2">Fecha de modificación</span><span class="ih3">Tipo</span></div>
            <div class="i-file"><svg class="s10"><use href="#i-folder"/></svg><span class="if1">db</span><span class="if2">19/08/2019 16:49</span><span class="if3">Carpeta de archivos</span></div>
            <svg class="i-sort"><use href="#i-cu"/></svg>
          </div>
        </div>
        <div class="i-status"><span>1 elemento</span><span>1 elemento seleccionado</span></div>
      </div>

      <div class="vtaskbar">
        <span class="vsearch"></span>
        <div class="vbar">
          <span class="vi w1"><svg class="s16"><use href="#v-task"/></svg></span>
          <span class="vi w2"><svg class="s16"><use href="#v-edge"/></svg></span>
          <span class="vi on"><svg class="s18"><use href="#t-folder"/></svg></span>
          <span class="vi"><svg class="s18"><use href="#v-store"/></svg></span>
          <span class="vi"><svg class="s18"><use href="#v-mail"/></svg></span>
          <span class="vi mark"><svg class="s18"><use href="#v-brave"/></svg></span>
          <span class="vi mark"><svg class="s18"><use href="#t-code"/></svg></span>
          <span class="vi mark"><svg class="s18"><use href="#v-ps"/></svg></span>
          <span class="vi mark"><svg class="s18"><use href="#v-term"/></svg></span>
          <span class="vtray">
            <svg class="vt-c"><use href="#i-cu"/></svg>
            <svg class="vt-m"><use href="#v-mic"/></svg>
            <svg class="vt-n"><use href="#v-net"/></svg>
            <svg class="vt-n"><use href="#s-spk"/></svg>
            <span class="vt-esp">ESP</span>
            <span class="vt-msg"><svg class="s18"><use href="#v-msg"/></svg><span class="vt-num">2</span></span>
          </span>
        </div>
      </div>
      <span class="vblack"></span>
    </div>
    <footer class="vlc-ctl"><span class="seek"></span><span class="vtime">-1:06:59</span></footer>
  </section>

  <section class="win front">
    <header class="f-title">
      <svg class="ft1"><use href="#i-folder"/></svg><span class="fsep"></span>
      <svg class="ft2"><use href="#i-check"/></svg>
      <svg class="ft3"><use href="#i-folder"/></svg>
      <svg class="ft4" viewBox="0 0 8 8"><path d="M.5 1.500h7M.5 4h7L4 7.500z" fill="#222" stroke="#222" stroke-width=".4"/></svg><span class="fsep s2"></span>
      <span class="f-name">C:\data\db</span>
      <span class="f-ctls">
        <svg class="fc"><path d="M0 5.500h10" stroke="#111"/></svg>
        <svg class="fc"><path d="M.5.500h9v9h-9z" fill="none" stroke="#111"/></svg>
        <svg class="fc"><path d="M0 0l10 10M10 0L0 10" stroke="#111" fill="none"/></svg>
      </span>
    </header>
    <div class="f-tabs">
      <span class="tab arch">Archivo</span>
      <span class="tab act">Inicio</span>
      <span class="tab tab-c">Compartir</span>
      <span class="tab tab-v">Vista</span>
      <svg class="rib-col"><use href="#i-cu"/></svg>
    </div>
    <div class="ribbon">
      <div class="grp g1">
        <div class="items">
          <div class="big b1"><svg class="bi pin"><use href="#i-pin"/></svg><span>Anclar al</span><span>Acceso rápido</span></div>
          <div class="big b2 dim"><svg class="bi"><use href="#i-copy"/></svg><span>Copiar</span></div>
          <div class="big b3 dim"><svg class="bi"><use href="#i-paste"/></svg><span>Pegar</span></div>
          <div class="smalls">
            <div class="sm dim"><svg class="s16"><use href="#i-cut"/></svg><span>Cortar</span></div>
            <div class="sm dim"><svg class="s16"><use href="#i-path"/></svg><span>Copiar ruta de acceso</span></div>
            <div class="sm dim"><svg class="s16"><use href="#i-short"/></svg><span>Pegar acceso directo</span></div>
          </div>
        </div>
        <div class="glabel">Portapapeles</div>
      </div>
      <div class="grp g2">
        <div class="items">
          <div class="big b4 dim"><svg class="bi"><use href="#i-move"/></svg><span>Mover</span><span class="dd">a <i class="car"></i></span></div>
          <div class="big b5 dim"><svg class="bi"><use href="#i-copyto"/></svg><span>Copiar</span><span class="dd">a <i class="car"></i></span></div>
          <span class="rsep"></span>
          <div class="big b6"><svg class="bi x"><use href="#i-x"/></svg><span>Eliminar</span><i class="car dark"></i></div>
          <div class="big b7 dim"><svg class="bi"><use href="#i-rename"/></svg><span>Cambiar</span><span>nombre</span></div>
        </div>
        <div class="glabel">Organizar</div>
      </div>
      <div class="grp g3">
        <div class="items">
          <div class="big b8"><svg class="bi"><use href="#i-newf"/></svg><span>Nueva</span><span>carpeta</span></div>
          <div class="newcol">
            <svg class="ni"><use href="#i-newi"/></svg><i class="car dark n1"></i>
            <svg class="ni nd"><use href="#i-newd"/></svg><i class="car dark n2"></i>
          </div>
        </div>
        <div class="glabel">Nuevo</div>
      </div>
      <div class="grp g4">
        <div class="items">
          <div class="big b9"><svg class="bi"><use href="#i-props"/></svg><span>Propiedades</span><i class="car dark"></i></div>
          <div class="smalls s2">
            <div class="sm dim"><svg class="s18"><use href="#i-open"/></svg><span>Abrir <i class="car"></i></span></div>
            <div class="sm dim"><svg class="s18"><use href="#i-edit"/></svg><span>Modificar</span></div>
            <div class="sm"><svg class="s18"><use href="#i-hist"/></svg><span>Historial</span></div>
          </div>
        </div>
        <div class="glabel">Abrir</div>
      </div>
      <div class="grp g5">
        <div class="items">
          <div class="smalls s3">
            <div class="sm"><svg class="s16"><use href="#i-sa"/></svg><span>Seleccionar todo</span></div>
            <div class="sm"><svg class="s16"><use href="#i-sn"/></svg><span>No seleccionar nada</span></div>
            <div class="sm"><svg class="s16"><use href="#i-si"/></svg><span>Invertir selección</span></div>
          </div>
        </div>
        <div class="glabel">Seleccionar</div>
      </div>
    </div>
    <div class="f-addr">
      <svg class="nav n-back"><use href="#i-back"/></svg>
      <svg class="nav n-fwd"><use href="#i-back"/></svg>
      <svg class="n-down"><use href="#i-cd"/></svg>
      <svg class="nav n-up"><use href="#i-up"/></svg>
      <div class="path">
        <svg class="pf"><use href="#i-folder"/></svg>
        <svg class="cr"><use href="#i-cr"/></svg><span>Este equipo</span>
        <svg class="cr"><use href="#i-cr"/></svg><span>Windows (C:)</span>
        <svg class="cr"><use href="#i-cr"/></svg><span>data</span>
        <svg class="cr"><use href="#i-cr"/></svg><span>db</span>
        <svg class="pd"><use href="#i-cd"/></svg>
      </div>
      <span class="pr"><svg class="s14"><use href="#i-refresh"/></svg></span>
      <span class="psearch"><svg class="s16"><use href="#i-search"/></svg><span>Buscar en db</span></span>
    </div>
    <div class="f-body">
      <aside class="tree">
        <div class="row lv0"><svg class="ti"><use href="#i-star"/></svg><span>Acceso rápido</span></div>
        <div class="row lv1"><svg class="ti"><use href="#i-desk"/></svg><span class="lbl">Desktop</span><svg class="pinned"><use href="#i-pins"/></svg></div>
        <div class="row lv1"><svg class="ti"><use href="#i-dl"/></svg><span class="lbl">Descargas</span><svg class="pinned"><use href="#i-pins"/></svg></div>
        <div class="row lv1"><svg class="ti"><use href="#i-doc"/></svg><span class="lbl">Documentos</span><svg class="pinned"><use href="#i-pins"/></svg></div>
        <div class="row lv1"><svg class="ti"><use href="#i-pic"/></svg><span class="lbl">Imágenes</span><svg class="pinned"><use href="#i-pins"/></svg></div>
        <div class="row lv1"><svg class="ti"><use href="#i-red"/></svg><span class="lbl">SoyHenry</span><svg class="pinned"><use href="#i-pins"/></svg></div>
        <div class="row lv0 sp"><svg class="ti"><use href="#i-desk"/></svg><span>Escritorio</span></div>
        <div class="row lv1"><svg class="ti"><use href="#i-user"/></svg><span>rodrigo</span></div>
        <div class="row lv1"><svg class="ti"><use href="#i-pc"/></svg><span>Este equipo</span></div>
        <div class="row lv2"><svg class="ti"><use href="#i-dl"/></svg><span>Descargas</span></div>
        <div class="row lv2"><svg class="ti"><use href="#i-desk"/></svg><span>Desktop</span></div>
        <div class="row lv2"><svg class="ti"><use href="#i-doc"/></svg><span>Documents</span></div>
      </aside>
      <div class="fscroll">
        <svg class="sa"><use href="#i-cu"/></svg>
        <span class="sthumb"></span>
        <svg class="sa"><use href="#i-cd"/></svg>
      </div>
      <div class="list">
        <div class="cols"><span class="c1">Nombre</span><span class="c2">Fecha de modificación</span><span class="c3">Tipo</span><span class="c4">Tamaño</span></div>
        <p class="empty">Esta carpeta está vacía.</p>
      </div>
    </div>
    <footer class="f-status"><span>0 elementos</span><span class="view-on fv"><svg class="s-view"><use href="#v-view"/></svg></span></footer>
    <svg class="sort"><use href="#i-cu"/></svg>
    <svg class="underline" viewBox="0 0 180 12"><path d="M3 9.500C20 5 60 3.500 70 3.500 90 3 105 8 125 8.500 140 9 160 9 172 8.500" fill="none" stroke="#e30d1c" stroke-width="5" stroke-linecap="round"/></svg>
    <span class="crear"><span class="lc">c</span><span class="lr">r</span><span class="le">e</span><span class="la">a</span><span class="lr2">r</span></span>
  </section>
</main>

<footer class="taskbar">
  <span class="start"><svg class="s16"><use href="#t-win"/></svg></span>
  <span class="tb open"><svg class="s22"><use href="#t-perf"/></svg></span>
  <span class="tb"><svg class="s22"><use href="#t-card"/></svg></span>
  <span class="tb"><svg class="s22"><use href="#t-word"/></svg></span>
  <span class="tb"><svg class="s22"><use href="#t-intel"/></svg></span>
  <span class="tb"><svg class="s22"><use href="#t-movie"/></svg></span>
  <span class="tb"><svg class="s22"><use href="#t-palette"/></svg></span>
  <span class="tb"><svg class="s22"><use href="#t-cam"/></svg></span>
  <span class="tb"><svg class="s22"><use href="#t-calc"/></svg></span>
  <span class="tb"><svg class="s22"><use href="#t-hat"/></svg></span>
  <span class="tb"><svg class="s22"><use href="#t-t"/></svg></span>
  <span class="tb"><svg class="s22"><use href="#t-h"/></svg></span>
  <span class="tb"><svg class="s22"><use href="#t-chrome"/></svg></span>
  <span class="tb"><svg class="s22"><use href="#t-ccl"/></svg></span>
  <span class="tb explorer open"><svg class="s22"><use href="#t-folder"/></svg></span>
  <span class="tb opera"><svg class="s22"><use href="#t-opera"/></svg></span>
  <span class="tb code open"><svg class="s22"><use href="#t-code"/></svg></span>
  <span class="tb"><svg class="s22"><use href="#t-notepad"/></svg></span>
  <span class="tb"><svg class="s22"><use href="#t-fz"/></svg></span>
  <span class="tb"><svg class="s22"><use href="#t-sub"/></svg></span>
  <span class="tb open"><svg class="s22"><use href="#t-yellow"/></svg></span>
  <span class="tb"><svg class="s22"><use href="#t-puzzle"/></svg></span>
  <span class="tb"><svg class="s22"><use href="#t-snip"/></svg></span>
  <span class="tb"><svg class="s22"><use href="#t-rain"/></svg></span>
  <span class="tb"><svg class="s22"><use href="#t-vc"/></svg></span>
  <span class="tb"><svg class="s22"><use href="#t-globe"/></svg></span>
  <span class="tb open"><svg class="s22"><use href="#t-vlc"/></svg></span>
  <span class="tb open"><svg class="s22"><use href="#t-kraken"/></svg></span>
  <span class="tray tr1"><svg class="s12c"><use href="#i-cu"/></svg></span>
  <span class="tray tr2"><svg class="s16"><use href="#s-bat"/></svg></span>
  <span class="tray tr3"><svg class="s16"><use href="#s-spk"/></svg></span>
  <span class="tray tr4"><svg class="s20"><use href="#s-pen"/></svg></span>
  <span class="tray tr5">ESP</span>
  <span class="tray clock"><span>16:28</span><span>9/12/2022</span></span>
  <span class="tray tr7"><svg class="s18"><use href="#s-note"/></svg></span>
</footer>
</body>
</html>
```

FILE: styles.css
```css
* { box-sizing: border-box; }
html, body { margin: 0; height: 768px; width: 1366px; overflow: hidden; background: #1c1c1c; }
body { font-family: "Noto Sans", "Open Sans", sans-serif; font-size: 11.4px; color: #1e1e1e; display: flex; flex-direction: column; }
svg { display: block; flex: none; overflow: visible; }
.defs { width: 0; height: 0; position: absolute; }
i { font-style: normal; }
.s10 { width: 10px; height: 10px; } .s11 { width: 11px; height: 11px; } .s12 { width: 12px; height: 12px; }
.s14 { width: 14px; height: 14px; } .s16 { width: 16px; height: 16px; } .s18 { width: 18px; height: 18px; }
.s20 { width: 20px; height: 20px; } .s22 { width: 23px; height: 23px; }

.desktop { position: relative; height: 728px; overflow: hidden; flex: none; background: #fff; }
.win { position: absolute; }

/* back window */
.back { left: 1008px; top: 0; width: 358px; height: 728px; background: #fff; display: flex; flex-direction: column; }
.back-title { height: 24px; display: flex; justify-content: flex-end; align-items: center; padding: 0 19px 0 0; gap: 34px; flex: none; }
.back-ctl { width: 12px; height: 12px; margin-top: -4px; }
.back-help { height: 22px; display: flex; justify-content: flex-end; align-items: center; gap: 9px; padding-right: 1px; flex: none; color: #a5a5a5; border-bottom: 1px solid #dadbdc; }
.cu { width: 10px; height: 6px; }
.help { width: 15px; height: 15px; border-radius: 50%; background: #1163ab; color: #fff; font-weight: 700; font-size: 12px; line-height: 15px; text-align: center; margin-top: -2px; }
.back-ribbon { height: 92px; background: #f5f6f7; border-bottom: 1px solid #dadbdc; flex: none; }
.back-addr { height: 28px; margin-top: 6px; display: flex; align-items: center; flex: none; color: #555; }
.back-addr .cd { width: 10px; height: 6px; margin-left: 136px; }
.back-ref { width: 30px; margin-left: 9px; height: 28px; display: flex; align-items: center; justify-content: center; border: 1px solid #d9d9d9; border-top-color: #e4e4e4; }
.back-search { margin-left: 14px; width: 146px; height: 28px; border: 1px solid #d9d9d9; display: flex; align-items: center; gap: 10px; padding: 0 0 1px 13px; color: #555; font-size: 11px; white-space: nowrap; }
.back-fill { flex: 1; }
.back-files { height: 45px; position: relative; display: flex; flex: none; padding-left: 30px; }
.bfolder { width: 56px; height: 23px; }
.bfolder.second { margin-left: 50px; }
.thumb { position: relative; width: 74px; height: 25px; margin-left: 58px; }
.thumb-dark { position: absolute; left: 4px; top: 0; width: 30px; height: 6px; background: #2a0d0d; }
.thumb-lines { position: absolute; left: 0; top: 8px; width: 30px; height: 17px; background: repeating-linear-gradient(#5a5a5a 0 1px, #e8e8e8 1px 2px); }
.thumb-lines.col2 { left: 34px; top: 1px; width: 20px; height: 24px; }
.foxit { position: absolute; left: 52px; top: 7px; width: 22px; height: 17px; }
.back-scroll { width: 10px; height: 6px; position: absolute; left: 344px; top: 11px; color: #555; }
.back-views { position: absolute; right: 3px; bottom: 0; display: flex; align-items: center; gap: 4px; }
.s-view { width: 16px; height: 14px; }
.view-on { width: 22px; height: 23px; display: flex; align-items: center; justify-content: center; background: #d9eefb; border: 1px solid #54aed8; }

/* VLC */
.vlc { left: 0; top: 0; width: 1008px; height: 728px; background: #fff; display: flex; flex-direction: column; box-shadow: 2px 0 6px rgba(0,0,0,.35); border-top: 1px solid #a0a0a0; border-right: 1px solid #a0a0a0; }
.vlc-title { height: 29px; display: flex; align-items: center; flex: none; }
.vlc-name { color: #666; font-size: 11.4px; }
.ctls { margin-left: auto; display: flex; padding-right: 17px; }
.ctl { width: 11px; height: 11px; }
.ctl + .ctl { margin-left: 41px; }
.ctl + .ctl + .ctl { margin-left: 35px; }
.vlc-menu { height: 22px; display: flex; align-items: center; color: #555; font-size: 10.9px; flex: none; }
.m1 { margin-left: 17px; } .m2 { margin-left: 16px; } .m3 { margin-left: 15px; }
.video { position: relative; flex: 1; display: flex; flex-direction: column; overflow: hidden;
  background:
    linear-gradient(to top, rgba(0,160,248,.55), rgba(0,160,248,0) 45%),
    linear-gradient(100deg, #0094f2 0%, #0082ea 33%, #0056cb 60%, #0036ae 85%); }
.vblack { position: absolute; right: 0; top: 0; bottom: 0; width: 58px; background: #000; }

.cmd { position: absolute; left: 20px; top: 69px; width: 667px; height: 60px; background: #000; filter: blur(.3px); }
.cmd-title { height: 22px; background: #fff; display: flex; align-items: center; padding: 1px 0 0 6px; color: #a8a8a8; font-size: 8.7px; }
.cmd-ic { width: 14px; height: 10px; margin-right: 1px; }
.cmd-ctls { margin-left: auto; display: flex; gap: 26px; padding-right: 14px; }
.vc { width: 9px; height: 9px; }
.cmd-body { height: 38px; position: relative; }
.cmd-scroll { position: absolute; right: 0; top: 0; bottom: 0; width: 9px; background: #e6e6e6; }

.inner { position: absolute; left: 8px; top: 100px; width: 852px; height: 449px; background: #fff; display: flex; flex-direction: column; font-size: 8.9px; color: #4a4a4a; border-left: 1px solid #d0dce8; filter: blur(.35px); }
.i-title { height: 23px; display: flex; align-items: center; gap: 3px; flex: none; }
.ml6 { margin-left: 8px; }
.isep { width: 1px; height: 9px; background: #bbb; margin: 0 2px; }
.i-drop { width: 7px; height: 7px; }
.i-name { margin-left: 3px; font-size: 9.2px; }
.i-ctls { margin-left: auto; display: flex; gap: 26px; padding-right: 13px; }
.i-tabs { height: 17px; display: flex; align-items: center; border-bottom: 1px solid #e4e4e4; flex: none; font-size: 8.2px; }
.i-arch { width: 43px; height: 17px; background: #1560ae; color: #e8f2fa; display: flex; align-items: center; justify-content: center; }
.i-t1 { margin-left: 10px; } .i-t2 { margin-left: 18px; } .i-t3 { margin-left: 20px; }
.i-addr { height: 22px; display: flex; align-items: center; flex: none; padding: 2px 0 0 9px; }
.i-nav { width: 10px; height: 10px; color: #777; }
.i-nav.b { color: #d4d4d4; margin-left: 14px; }
.i-nav2 { width: 6px; height: 4px; margin-left: 9px; color: #999; }
.i-nav.up { margin-left: 6px; }
.i-path { margin-left: 4px; flex: 1; height: 17px; border: 1px solid #ececec; display: flex; align-items: center; padding-left: 4px; }
.i-cr { width: 3px; height: 6px; margin: 0 6px 0 8px; color: #777; }
.i-body { flex: 1; display: flex; min-height: 0; position: relative; }
.i-tree { width: 106px; overflow: hidden; flex: none; }
.irow { height: 18.15px; display: flex; align-items: center; gap: 3px; padding-left: 25px; white-space: nowrap; position: relative; }
.irow.lv0 { padding-left: 19px; gap: 4px; }
.irow.first { margin-top: 18px; }
.irow.gap { margin-top: 6px; padding-left: 18px; gap: 3px; }
.irow.sel { background: #d0d0d0; }
.ipin { width: 7px; height: 7px; position: absolute; left: 96px; top: 6px; }
.i-scroll { width: 12px; margin-top: 6px; background: #f0f0f0; display: flex; flex-direction: column; align-items: center; height: 365px; flex: none; color: #555; }
.i-sa { width: 7px; height: 4px; margin: 4px 0; }
.i-thumb { width: 12px; height: 328px; background: #c8c8c8; margin-bottom: auto; }
.i-main { flex: 1; position: relative; }
.i-head { height: 29px; padding-top: 8px; display: flex; color: #777; white-space: nowrap; }
.ih1 { margin-left: 16px; width: 197px; } .ih2 { width: 109px; }
.i-file { height: 17px; margin-left: 14px; background: #cce8ff; border: 1px solid #99d1ff; display: flex; align-items: center; padding-left: 4px; white-space: nowrap; }
.if1 { width: 181px; margin-left: 3px; color: #333; } .if2 { width: 109px; color: #888; } .if3 { color: #888; }
.i-sort { position: absolute; left: 107px; top: 4px; width: 7px; height: 4px; color: #aaa; }
.i-status { height: 15px; flex: none; display: flex; gap: 13px; padding-left: 11px; align-items: center; color: #666; border-bottom: 1px solid #1b81d6; }

.vtaskbar { margin-top: auto; height: 30px; display: flex; position: relative; flex: none; }
.vsearch { width: 83px; background: #f3f3f3; border-bottom: 1px solid #ccc; }
.vbar { flex: 1; background: #1c2d3d; display: flex; align-items: center; padding-right: 59px; position: relative; }
.vi { width: 37.300px; height: 30px; display: flex; align-items: center; justify-content: center; position: relative; flex: none; }
.vi.w1 { margin-left: 0; width: 37px; } .vi.w2 { margin: 0 2px 0 1px; }
.vi.on { background: #3a4a5a; }
.vi.on::after, .vi.mark::after { content: ""; position: absolute; left: 3px; right: 3px; bottom: 0; height: 2px; background: #8dbbe0; }
.vi.on::after { left: 0; right: 0; }
.vtray { margin-left: auto; display: flex; align-items: center; color: #c7ced4; font-size: 9px; }
.vt-c { width: 11px; height: 7px; }
.vt-m { width: 8px; height: 13px; margin-left: 9px; }
.vt-n { width: 13px; height: 11px; margin-left: 7px; }
.vt-esp { margin-left: 8px; }
.vt-msg { margin-left: 15px; margin-right: 12px; position: relative; width: 18px; height: 18px; }
.vt-num { position: absolute; left: 8px; top: 5px; color: #eee; font-size: 8px; }

.vlc-ctl { height: 22px; flex: none; background: #f0f0f0; display: flex; align-items: flex-start; position: relative; }
.seek { width: 941px; height: 9px; background: #d7d7d7; border-radius: 0 5px 5px 0; margin-top: 3px; }
.vtime { margin-left: 19px; color: #222; font-size: 11px; line-height: 18px; }

/* front explorer */
.front { left: 470px; top: 168px; width: 920px; height: 514px; background: #fff; display: flex; flex-direction: column; box-shadow: 0 0 10px rgba(0,0,0,.35); border-top: 1px solid #c8c8c8; font-size: 11.4px; }
.f-title { height: 31px; display: flex; align-items: center; flex: none; position: relative; }
.ft1 { width: 14px; height: 16px; margin-left: 11px; }
.fsep { width: 1px; height: 12px; background: #a5a5a5; margin-left: 7px; }
.ft2 { width: 13px; height: 16px; margin-left: 11px; }
.ft3 { width: 13px; height: 16px; margin-left: 9px; }
.ft4 { width: 7px; height: 8px; margin-left: 8px; }
.fsep.s2 { margin-left: 8px; }
.f-name { margin-left: 7px; font-size: 11.6px; color: #1a1a1a; }
.f-ctls { margin-left: auto; display: flex; gap: 35px; padding-right: 18px; }
.fc { width: 10px; height: 10px; }
.f-tabs { height: 24px; display: flex; align-items: stretch; flex: none; padding-left: 1px; position: relative; margin-bottom: -1px; z-index: 1; font-size: 11px; }
.tab { display: flex; align-items: center; justify-content: center; color: #333; padding-bottom: 2px; }
.arch { width: 56px; background: #0263b3; color: #fff; }
.act { width: 55px; border: 1px solid #dadbdc; border-bottom: 0; border-left: 0; background: linear-gradient(#fff, #fff 90%, #f5f6f7); }
.tab-c { margin-left: 16px; }
.tab-v { margin-left: 27px; }
.rib-col { position: absolute; left: 883px; top: 9px; width: 10px; height: 6px; color: #aaa; }
.ribbon { height: 94px; background: #f5f6f7; border-top: 1px solid #dadbdc; border-bottom: 1px solid #dadbdc; display: flex; flex: none; padding-left: 1px; }
.grp { display: flex; flex-direction: column; border-right: 1px solid #e2e3e4; margin: 2px 0 3px; flex: none; position: relative; }
.g1 { width: 310px; } .g2 { width: 197px; } .g3 { width: 83px; } .g4 { width: 155px; } .g5 { width: 142px; }
.items { flex: 1; display: flex; min-height: 0; }
.glabel { height: 17px; text-align: center; color: #555; font-size: 11px; line-height: 19px; }
.big { display: flex; flex-direction: column; align-items: center; line-height: 13px; white-space: nowrap; padding-top: 6px; flex: none; font-size: 11px; color: #333; }
.bi { width: 30px; height: 30px; margin-bottom: 4px; }
.dim { color: #6d7680; }
.b1 { width: 72px; margin-left: 8px; } .b2 { width: 42px; margin-left: 2px; } .b3 { width: 42px; margin-left: 1px; }
.b4 { width: 44px; margin-left: 3px; } .b5 { width: 40px; } .b6 { width: 44px; margin-left: 3px; } .b7 { width: 50px; }
.b8 { width: 50px; } .b9 { width: 72px; margin-left: 3px; }
.rsep { width: 1px; height: 55px; background: #e2e3e4; margin: 6px 0 0 6px; }
.car { display: inline-block; border: 3px solid transparent; border-top: 4px solid #a9b0b8; border-bottom: 0; vertical-align: middle; margin-left: 2px; }
.car.dark { border-top-color: #333; margin: 5px 0 0; }
.dd { text-indent: -6px; }
.smalls { display: flex; flex-direction: column; margin-left: 3px; padding-top: 1px; gap: 0; }
.smalls.s2 { margin-left: 1px; }
.smalls.s3 { margin-left: 8px; }
.sm { height: 22px; display: flex; align-items: center; gap: 3px; white-space: nowrap; font-size: 11px; color: #333; }
.sm.dim { color: #6d7680; }
.newcol { width: 26px; position: relative; }
.ni { width: 22px; height: 16px; position: absolute; left: 0; top: 5px; }
.ni.nd { top: 27px; height: 17px; }
.car.n1 { position: absolute; left: 23px; top: 8px; margin: 0; }
.car.n2 { position: absolute; left: 23px; top: 30px; margin: 0; }

.f-addr { height: 35px; padding-top: 5px; display: flex; align-items: stretch; flex: none; position: relative; }
.nav { width: 14px; height: 14px; align-self: center; color: #6a6a6a; }
.n-back { margin-left: 13px; }
.n-fwd { margin-left: 15px; color: #d3d3d3; }
.n-down { width: 8px; height: 5px; align-self: center; margin-left: 12px; color: #888; }
.n-up { margin-left: 10px; }
.path { margin-left: 6px; width: 610px; border: 1px solid #d9d9d9; border-width: 1px 0 1px 1px; background: #fff; display: flex; align-items: center; padding: 0 0 3px 4px; color: #1e1e1e; white-space: nowrap; }
.pf { width: 13px; height: 16px; }
.cr { width: 5px; height: 8px; margin: 0 9px; color: #6f6f6f; }
.pd { width: 10px; height: 6px; margin-left: auto; margin-right: 8px; color: #666; }
.pr { width: 31px; border: 1px solid #d9d9d9; display: flex; align-items: center; justify-content: center; }
.psearch { margin-left: 13px; width: 160px; border: 1px solid #d9d9d9; display: flex; align-items: center; gap: 12px; padding: 0 0 3px 13px; color: #666; white-space: nowrap; font-size: 11px; }
.f-body { flex: 1; display: flex; min-height: 0; position: relative; }
.tree { width: 129px; padding-top: 13px; overflow: hidden; flex: none; }
.row { height: 24px; display: flex; align-items: center; white-space: nowrap; position: relative; color: #1e1e1e; }
.row.sp { margin-top: 8px; }
.ti { width: 16px; height: 16px; margin-right: 5px; }
.lv0 { padding-left: 25px; }
.lv1 { padding-left: 33px; }
.lv2 { padding-left: 41px; }
.lbl { display: block; max-width: 59px; overflow: hidden; }
.pinned { position: absolute; left: 114px; top: 7px; width: 11px; height: 11px; }
.fscroll { width: 15px; height: 298px; margin-top: 9px; background: #f0f0f0; display: flex; flex-direction: column; align-items: center; flex: none; margin-left: 0; color: #444; }
.sa { width: 10px; height: 6px; margin: 5px 0 4px; }
.sthumb { width: 15px; height: 99px; background: #cdcdcd; margin-bottom: auto; }
.list { flex: 1; }
.cols { display: grid; grid-template-columns: 276px 144px 120px 80px; height: 24px; margin-top: 8px; color: #4c607a; }
.cols span { padding-left: 7px; border-right: 1px solid #e5e5e5; line-height: 20px; }
.cols .c1 { padding-left: 22px; }
.empty { margin: 14px 0 0; width: 782px; text-align: center; color: #6d6d6d; font-size: 11px; }
.f-status { height: 24px; flex: none; display: flex; align-items: center; padding: 0 0 2px 15px; color: #444; position: relative; }
.fv { position: absolute; left: 873px; top: 1px; }
.sort { position: absolute; left: 285px; top: 188px; width: 10px; height: 6px; color: #777; }
.underline { position: absolute; left: 228px; top: 179px; width: 180px; height: 12px; }
.crear { position: absolute; left: 260px; top: 234px; display: flex; font-family: "DejaVu Sans", sans-serif; font-size: 32px; line-height: 36px; color: #f0000f; -webkit-text-stroke: 5px #f0000f; }
.crear span { display: block; transform-origin: left top; }
.lc { width: 33px; transform: translate(3px, -2px) scaleX(1.400); }
.lr { width: 23px; transform: translate(0, -3px) scaleX(1.300); }
.le { width: 22px; transform: translate(0, 0) scaleX(.85); }
.la { width: 23px; transform: translate(0, 8px) scaleY(.800); }
.lr2 { width: 20px; transform: translate(0, 2px) scaleX(1.200); }

/* taskbar */
.taskbar { height: 40px; flex: none; display: flex; align-items: stretch; background: linear-gradient(90deg, #323232, #2a2a2a 45%, #1c1c1c 65%, #1c1c1c); color: #ececec; }
.start { width: 51px; display: flex; align-items: center; justify-content: center; padding-right: 5px; }
.tb { width: 39.300px; display: flex; align-items: center; justify-content: center; position: relative; flex: none; }
.tb.open::after { content: ""; position: absolute; left: 4px; right: 4px; bottom: 0; height: 2px; background: #76b9ed; }
.tb.explorer { width: 38px; background: #5c5c5c; }
.tb.explorer::after { left: 0; right: 0; }
.tb.explorer svg { margin-right: 4px; }
.tb.opera { width: 30px; margin-left: 5px; background: #8d1d1f; border-bottom: 2px solid #e81123; }
.tb.code { margin-left: 4px; }
.tray { display: flex; align-items: center; justify-content: center; flex: none; }
.tr1 { width: 23px; } .tr2 { width: 25px; } .tr3 { width: 23px; } .tr4 { width: 33px; } .tr5 { width: 34px; font-size: 11px; }
.s12c { width: 12px; height: 7px; color: #eee; }
.clock { width: 56px; margin-left: 5px; padding-top: 1px; flex-direction: column; font-size: 11.2px; line-height: 17px; white-space: nowrap; }
.tr7 { width: 53px; }
```
